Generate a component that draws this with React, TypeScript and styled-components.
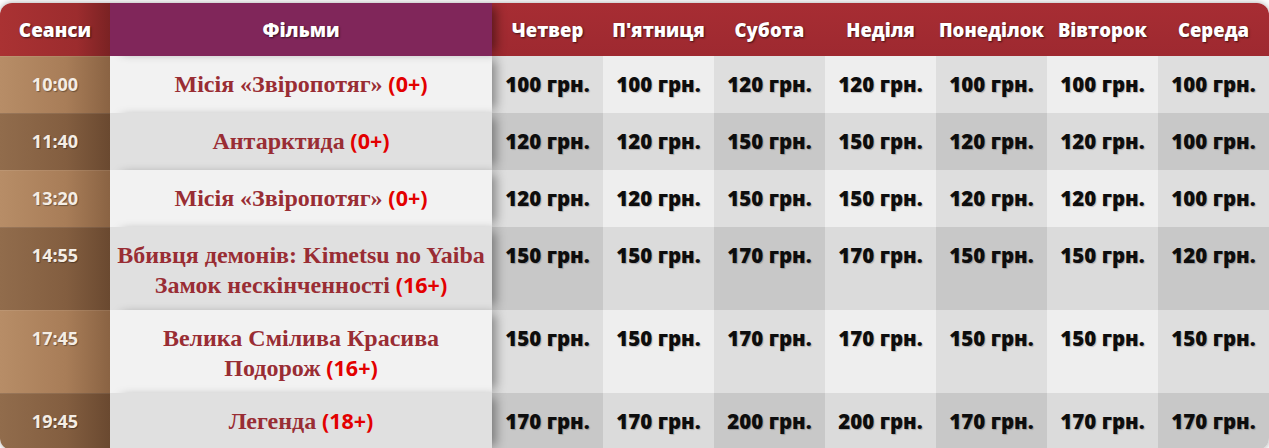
import React from 'react';
import styled, { createGlobalStyle } from 'styled-components';

const GlobalStyle = createGlobalStyle`
  html, body {
    margin: 0;
    padding: 0;
    background: #ffffff;
    font-family: 'Open Sans', 'Liberation Sans', sans-serif;
  }
`;

const Page = styled.div`
  padding-top: 3px;
`;

const Frame = styled.div`
  border-radius: 12px;
  overflow: hidden;
  box-shadow: 0 0 6px rgba(0, 0, 0, 0.35);
`;

const Table = styled.table`
  width: 100%;
  border-collapse: separate;
  border-spacing: 0;
  table-layout: fixed;
`;

type HeadKind = 'time' | 'film' | 'day';

const HeadCell = styled.th<{ $kind: HeadKind }>`
  height: 53px;
  padding: 0 2px;
  box-sizing: border-box;
  color: #ffffff;
  font-size: ${(p) => (p.$kind === 'day' ? '18.5px' : '19px')};
  font-weight: 800;
  text-align: center;
  vertical-align: middle;
  white-space: nowrap;
  text-shadow: 1px 1px 2px rgba(0, 0, 0, 0.6);
  position: ${(p) => (p.$kind === 'film' ? 'relative' : 'static')};
  z-index: ${(p) => (p.$kind === 'film' ? 2 : 'auto')};
  background: ${(p) =>
    p.$kind === 'time'
      ? 'linear-gradient(90deg, #aa3233 0%, #9c2c2e 70%, #7a2223 100%)'
      : p.$kind === 'film'
      ? '#80265a'
      : 'linear-gradient(180deg, #a72d33, #9e2930)'};
  box-shadow: ${(p) => (p.$kind === 'film' ? '8px 0 10px -4px rgba(0, 0, 0, 0.45)' : 'none')};
`;

const TimeCell = styled.td<{ $dark: boolean }>`
  padding: 12.5px 4px 14.5px;
  line-height: 29px;
  text-align: center;
  vertical-align: top;
  color: #f4ede5;
  font-size: 18px;
  font-weight: 700;
  text-shadow: 1px 1px 1px rgba(0, 0, 0, 0.35);
  border-top: 1px solid rgba(255, 255, 255, 0.08);
  background: ${(p) =>
    p.$dark
      ? 'linear-gradient(90deg, #916c4c 0%, #835e40 60%, #6a4930 100%)'
      : 'linear-gradient(90deg, #b78d67 0%, #a87d58 60%, #8a6343 100%)'};
`;

const FilmCell = styled.td<{ $dark: boolean }>`
  position: relative;
  z-index: 1;
  padding: 12px 2px 11px;
  line-height: 30px;
  font-size: 22px;
  text-align: center;
  vertical-align: top;
  background: ${(p) => (p.$dark ? '#e0e0e0' : '#f2f2f2')};
  box-shadow: 8px 0 10px -4px rgba(0, 0, 0, 0.4);
`;

const Title = styled.span`
  font-family: 'Liberation Serif', 'Times New Roman', serif;
  font-weight: 700;
  font-size: 24px;
  line-height: 1;
  color: #992d34;
`;

const Rating = styled.span`
  font-family: 'Open Sans', 'Liberation Sans', sans-serif;
  font-weight: 700;
  font-size: 21.5px;
  line-height: 1;
  color: #e30000;
`;

const PriceCell = styled.td<{ $dark: boolean; $alt: boolean }>`
  padding: 13.5px 2px;
  line-height: 29px;
  text-align: center;
  vertical-align: top;
  color: #0d0d0d;
  font-size: 20.5px;
  font-weight: 800;
  white-space: nowrap;
  text-shadow: 1px 1px 1px rgba(0, 0, 0, 0.22);
  background: ${(p) =>
    p.$dark ? (p.$alt ? '#dbdbdb' : '#c8c8c8') : p.$alt ? '#eeeeee' : '#dedede'};
`;

const days = ['Четвер', "П'ятниця", 'Субота', 'Неділя', 'Понеділок', 'Вівторок', 'Середа'];

interface Session {
  time: string;
  title: React.ReactNode;
  rating: string;
  prices: number[];
}

const sessions: Session[] = [
  { time: '10:00', title: 'Місія «Звіропотяг»', rating: '(0+)', prices: [100, 100, 120, 120, 100, 100, 100] },
  { time: '11:40', title: 'Антарктида', rating: '(0+)', prices: [120, 120, 150, 150, 120, 120, 100] },
  { time: '13:20', title: 'Місія «Звіропотяг»', rating: '(0+)', prices: [120, 120, 150, 150, 120, 120, 100] },
  {
    time: '14:55',
    title: (
      <>
        Вбивця демонів: Kimetsu no Yaiba
        <br />
        Замок нескінченності
      </>
    ),
    rating: '(16+)',
    prices: [150, 150, 170, 170, 150, 150, 120],
  },
  {
    time: '17:45',
    title: (
      <>
        Велика Смілива Красива
        <br />
        Подорож
      </>
    ),
    rating: '(16+)',
    prices: [150, 150, 170, 170, 150, 150, 150],
  },
  { time: '19:45', title: 'Легенда', rating: '(18+)', prices: [170, 170, 200, 200, 170, 170, 170] },
];

const App: React.FC = () => {
  return (
    <Page>
      <GlobalStyle />
      <Frame>
        <Table>
          <colgroup>
            <col style={{ width: 110 }} />
            <col style={{ width: 382 }} />
            {days.map((d) => (
              <col key={d} />
            ))}
          </colgroup>
          <thead>
            <tr>
              <HeadCell $kind="time">Сеанси</HeadCell>
              <HeadCell $kind="film">Фільми</HeadCell>
              {days.map((d) => (
                <HeadCell key={d} $kind="day">
                  {d}
                </HeadCell>
              ))}
            </tr>
          </thead>
          <tbody>
            {sessions.map((s, i) => {
              const dark = i % 2 === 1;
              return (
                <tr key={s.time}>
                  <TimeCell $dark={dark}>{s.time}</TimeCell>
                  <FilmCell $dark={dark}>
                    <Title>{s.title}</Title> <Rating>{s.rating}</Rating>
                  </FilmCell>
                  {s.prices.map((p, j) => (
                    <PriceCell key={j} $dark={dark} $alt={j % 2 === 1}>
                      {p} грн.
                    </PriceCell>
                  ))}
                </tr>
              );
            })}
          </tbody>
        </Table>
      </Frame>
    </Page>
  );
};

export default App;
